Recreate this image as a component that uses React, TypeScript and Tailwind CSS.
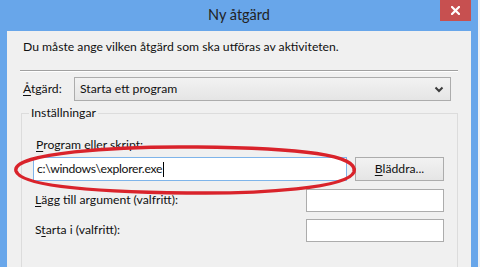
import React from 'react';

const font = { fontFamily: 'Lato, "Noto Sans", "DejaVu Sans", sans-serif' };

const Key: React.FC<{ children: React.ReactNode }> = ({ children }) => (
  <span className="underline underline-offset-2">{children}</span>
);

const App: React.FC = () => {
  return (
    <div className="w-[480px] h-[267px] bg-[#eef1f5] overflow-hidden" style={font}>
      <div className="w-[478px] h-[267px] bg-[#68a6ea] px-[7px] flex flex-col">
        {/* Title bar */}
        <div className="relative h-[31px] shrink-0 flex items-center justify-center">
          <span className="text-[14.5px] text-[#222] -mt-[1px]">Ny åtgärd</span>
          <div className="absolute top-0 right-0 w-[31px] h-[21px] bg-[#c75050] flex items-center justify-center">
            <svg width="9" height="9" viewBox="0 0 9 9">
              <path d="M1 1 L8 8 M8 1 L1 8" stroke="#fff" strokeWidth="2.2" strokeLinecap="square" />
            </svg>
          </div>
        </div>

        {/* Content */}
        <div className="relative flex-1 bg-[#f0f0f0] text-[12.2px] text-[#111] flex flex-col">
          <div className="pl-[16px] pt-[7px] h-[32px] leading-[18px]">
            Du måste ange vilken åtgärd som ska utföras av aktiviteten.
          </div>
          <div className="mx-[13px] mt-[7px] h-[2px] border-t border-[#a0a0a0] border-b border-b-white" />

          <div className="flex items-center mt-[5px] h-[24px]">
            <span className="pl-[16px] w-[67px]">
              <Key>Å</Key>tgärd:
            </span>
            <div className="w-[377px] h-[24px] border border-[#acacac] bg-gradient-to-b from-[#f2f2f2] to-[#e5e5e5] flex items-center justify-between pl-[5px] pr-[6px]">
              <span>Starta ett program</span>
              <svg width="10" height="7" viewBox="0 0 10 7">
                <path d="M1.5 1.5 L5 5 L8.5 1.5" stroke="#3c3c3c" strokeWidth="2" fill="none" />
              </svg>
            </div>
          </div>

          {/* Group box */}
          <div className="relative ml-[14px] mr-[13px] mt-[12px] flex-1 border border-[#dcdcdc] border-b-0">
            <span className="absolute -top-[10px] left-[7px] px-[2px] bg-[#f0f0f0] leading-[18px]">
              Inställningar
            </span>
            <div className="pl-[14px] pr-[13px] pt-[22px] flex flex-col">
              <div className="leading-[18px]">
                <Key>P</Key>rogram eller skript:
              </div>
              <div className="flex items-center mt-[3px] -ml-[3px]">
                <div className="w-[314px] h-[24px] border border-[#7eb4ea] bg-white flex items-center pl-[3px]">
                  <span className="tracking-[-0.3px]">c:\windows\explorer.exe</span>
                  <span className="w-[1px] h-[15px] bg-black ml-[1px]" />
                </div>
                <div className="ml-[8px] w-[89px] h-[24px] border border-[#acacac] bg-gradient-to-b from-[#f2f2f2] to-[#e5e5e5] flex items-center justify-center">
                  <span>
                    <Key>B</Key>läddra...
                  </span>
                </div>
              </div>
              <div className="flex items-center justify-between mt-[8px] h-[23px] -ml-[1px]">
                <span>
                  <Key>L</Key>ägg till argument (valfritt):
                </span>
                <div className="w-[138px] h-[23px] border border-[#acacac] bg-white" />
              </div>
              <div className="flex items-center justify-between mt-[7px] h-[23px] -ml-[1px]">
                <span>
                  S<Key>t</Key>arta i (valfritt):
                </span>
                <div className="w-[138px] h-[23px] border border-[#acacac] bg-white" />
              </div>
            </div>
          </div>

          {/* Red highlight ellipse */}
          <svg className="absolute left-0 top-0 pointer-events-none" width="465" height="236" viewBox="0 0 465 236">
            <path
              d="M9 140 C 4 122, 110 115, 190 116 C 295 117, 352 124, 347 141 C 341 157, 255 163, 180 162 C 95 161, 14 156, 9 140 Z"
              stroke="#d9232b"
              strokeWidth="3.5"
              fill="none"
            />
          </svg>
        </div>
      </div>
    </div>
  );
};

export default App;
